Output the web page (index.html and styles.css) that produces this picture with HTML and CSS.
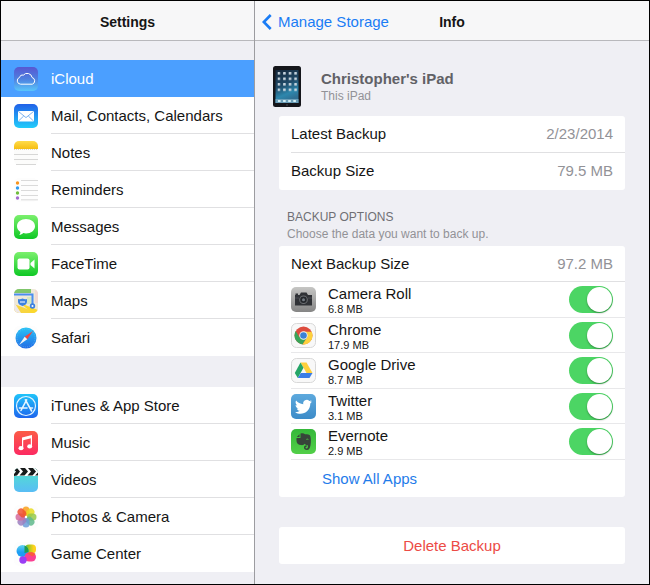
FILE: index.html
```html
<!DOCTYPE html>
<html lang="en">
<head>
<meta charset="utf-8">
<meta name="viewport" content="width=device-width, initial-scale=1">
<title>Settings</title>
<link rel="stylesheet" href="styles.css">
</head>
<body>
<div class="window">
  <aside class="sidebar">
    <header class="bar"><h1 class="bar-title">Settings</h1></header>
    <nav class="menu">
      <ul class="menu-group">
        <li><a class="menu-item is-active" href="#icloud">
          <svg class="icon" viewBox="0 0 24 24" aria-hidden="true">
            <defs><linearGradient id="g-cloud" x2="0" y2="1"><stop stop-color="#5757d2"/><stop offset=".5" stop-color="#4e80df"/><stop offset="1" stop-color="#5ac5fa"/></linearGradient></defs>
            <rect width="24" height="24" rx="5" fill="url(#g-cloud)"/>
            <path d="M6.6 17.2a3.5 3.5 0 0 1-1-6.8 2.8 2.8 0 0 1 3.7-2.2 5 5 0 0 1 8.800 2.300 3.500 3.500 0 0 1 .2 6.700z" fill="none" stroke="#fff" stroke-width="1"/>
          </svg><span class="menu-label">iCloud</span></a></li>
        <li><a class="menu-item" href="#mail">
          <svg class="icon" viewBox="0 0 24 24" aria-hidden="true">
            <defs><linearGradient id="g-mail" x2="0" y2="1"><stop stop-color="#2161e8"/><stop offset="1" stop-color="#22ccfb"/></linearGradient></defs>
            <rect width="24" height="24" rx="5" fill="url(#g-mail)"/>
            <rect x="4" y="7" width="16" height="10.5" rx="1" fill="#fff"/>
            <path d="M4.5 7.5 12 13.6l7.500-6.100M4.500 17l5.200-5M19.500 17l-5.200-5" fill="none" stroke="#5b9fe8" stroke-width=".8"/>
          </svg><span class="menu-label">Mail, Contacts, Calendars</span></a></li>
        <li><a class="menu-item" href="#notes">
          <svg class="icon" viewBox="0 0 24 24" aria-hidden="true">
            <defs><linearGradient id="g-note" x2="0" y2="1"><stop stop-color="#ffdc4b"/><stop offset="1" stop-color="#f6be12"/></linearGradient></defs>
            <rect width="24" height="24" rx="5" fill="#fcfcfb"/>
            <path d="M0 8V5a5 5 0 0 1 5-5h14a5 5 0 0 1 5 5v3z" fill="url(#g-note)"/>
            <path d="M0 8.500h24" stroke="#c9c09d" stroke-dasharray="1 1" stroke-width=".6"/>
            <path d="M0 13.500h24M0 18.500h24M2 23.500h20" stroke="#cdcdcd" stroke-width=".8"/>
          </svg><span class="menu-label">Notes</span></a></li>
        <li><a class="menu-item" href="#reminders">
          <svg class="icon" viewBox="0 0 24 24" aria-hidden="true">
            <rect width="24" height="24" rx="5" fill="#fdfdfd"/>
            <path d="M7 2.500h17M7 7.500h17M7 12.500h17M7 17.500h17M7 21.800h17" stroke="#d0d0d0" stroke-width=".8"/>
            <circle cx="3.500" cy="5" r="1.700" fill="#f7941e"/><circle cx="3.500" cy="10" r="1.700" fill="#2f9cf0"/><circle cx="3.500" cy="15" r="1.700" fill="#70bd3c"/><circle cx="3.500" cy="20" r="1.700" fill="#a36bd0"/>
          </svg><span class="menu-label">Reminders</span></a></li>
        <li><a class="menu-item" href="#messages">
          <svg class="icon" viewBox="0 0 24 24" aria-hidden="true">
            <defs><linearGradient id="g-green" x2="0" y2="1"><stop stop-color="#7bf06d"/><stop offset="1" stop-color="#0fc825"/></linearGradient></defs>
            <rect width="24" height="24" rx="5" fill="url(#g-green)"/>
            <path d="M12 4c5 0 9 3.100 9 7.200s-4 7.200-9 7.200c-1 0-1.900-.1-2.800-.4-.9 1-2.300 1.700-4 1.900.8-.8 1.200-1.800 1.200-3C4.300 15.600 3 13.600 3 11.200 3 7.100 7 4 12 4z" fill="#fff"/>
          </svg><span class="menu-label">Messages</span></a></li>
        <li><a class="menu-item" href="#facetime">
          <svg class="icon" viewBox="0 0 24 24" aria-hidden="true">
            <rect width="24" height="24" rx="5" fill="url(#g-green)"/>
            <rect x="3.500" y="6.500" width="12" height="11" rx="2" fill="#fff"/><path d="m16.500 11 4-3.500v9l-4-3.500z" fill="#fff"/>
          </svg><span class="menu-label">FaceTime</span></a></li>
        <li><a class="menu-item" href="#maps">
          <svg class="icon" viewBox="0 0 24 24" aria-hidden="true">
            <defs><clipPath id="tile"><rect width="24" height="24" rx="5"/></clipPath></defs>
            <g clip-path="url(#tile)">
              <rect width="24" height="24" fill="#eee8d8"/><path d="M0 0h17v4H0z" fill="#7fc66b"/><path d="M21 0h3v14h-3z" fill="#f1d9d2"/><path d="M0 15 24 24H0z" fill="#f8d53f"/><path d="M6 14 18 24h6v-3z" fill="#fbd82e"/><path d="M0 13l7 11H0z" fill="#eee8e8"/><path d="M13 8h5v7h-5z" fill="#d6e8c2"/>
              <path d="M0 5.500h18.500V16" fill="none" stroke="#4a8df0" stroke-width="2"/>
              <path d="M4 10c2 .8 3 0 4.500-.5 1.500.5 2.500 1.300 4.500.5v3c0 2-2 3-4.500 4C6 16 4 15 4 13z" fill="#3c82e0"/><path d="M6 13h5" stroke="#fff"/>
              <circle cx="18.500" cy="17" r="2.700" fill="#3e80de"/><circle cx="18.500" cy="17" r="1" fill="#fff"/>
            </g>
          </svg><span class="menu-label">Maps</span></a></li>
        <li><a class="menu-item" href="#safari">
          <svg class="icon" viewBox="0 0 24 24" aria-hidden="true">
            <defs><linearGradient id="g-saf" x2="0" y2="1"><stop stop-color="#27c3f6"/><stop offset="1" stop-color="#216be5"/></linearGradient></defs>
            <rect width="24" height="24" rx="5" fill="#fdfdfd"/><circle cx="12" cy="12" r="10.500" fill="url(#g-saf)"/>
            <circle cx="12" cy="12" r="9" fill="none" stroke="#8ccdf8" stroke-width=".8" stroke-dasharray=".5 1.500"/>
            <path d="m19 5-8.300 5.700 2.600 2.600z" fill="#f2453f"/><path d="m5 19 5.700-8.300 2.600 2.600z" fill="#f4f4f4"/>
          </svg><span class="menu-label">Safari</span></a></li>
      </ul>
      <ul class="menu-group">
        <li><a class="menu-item" href="#store">
          <svg class="icon" viewBox="0 0 24 24" aria-hidden="true">
            <defs><linearGradient id="g-store" x2="0" y2="1"><stop stop-color="#20c4fa"/><stop offset="1" stop-color="#1d66ee"/></linearGradient></defs>
            <rect width="24" height="24" rx="5" fill="url(#g-store)"/><circle cx="12" cy="12" r="9.500" fill="none" stroke="#e4f5ff" stroke-width="1.200"/>
            <path d="M12.600 5.800 7 16.500M11.400 5.800 17.600 17M5.500 14H13M16.500 14h2" stroke="#e4f5ff" stroke-width="1.600" stroke-linecap="round"/>
          </svg><span class="menu-label">iTunes &amp; App Store</span></a></li>
        <li><a class="menu-item" href="#music">
          <svg class="icon" viewBox="0 0 24 24" aria-hidden="true">
            <defs><linearGradient id="g-mus" x2="0" y2="1"><stop stop-color="#fb5c46"/><stop offset="1" stop-color="#fc2a62"/></linearGradient></defs>
            <rect width="24" height="24" rx="5" fill="url(#g-mus)"/>
            <path d="M8 6.500 18 4v3L9.200 9.200V17H8z" fill="#fff"/><path d="M16.800 6H18v9.500h-1.200z" fill="#fff"/><ellipse cx="7" cy="17.200" rx="2.500" ry="2.100" fill="#fff"/><ellipse cx="15.700" cy="15.400" rx="2.500" ry="2.100" fill="#fff"/>
          </svg><span class="menu-label">Music</span></a></li>
        <li><a class="menu-item" href="#videos">
          <svg class="icon" viewBox="0 0 24 24" aria-hidden="true">
            <defs><linearGradient id="g-vid" x2="0" y2="1"><stop stop-color="#50e3cb"/><stop offset="1" stop-color="#59bdf5"/></linearGradient></defs>
            <g clip-path="url(#tile)"><rect width="24" height="24" fill="url(#g-vid)"/><path d="M0 0h24v8H0z" fill="#fff"/>
            <path d="M0 0h3l3 3.500H2L0 2zM6 0h5l3 3.500H9zM14 0h5l3 3.500h-5zM21 0h3v3zM0 8V6l2-2.500h4L3 7.500zM5.500 7.500 9 3.500h5l-3.500 4zM13.500 7.500l3.500-4h5l-3.500 4zM21 7.500l3-3v3z" fill="#171b1b"/></g>
          </svg><span class="menu-label">Videos</span></a></li>
        <li><a class="menu-item" href="#photos">
          <svg class="icon petals" viewBox="0 0 24 24" aria-hidden="true">
            <rect width="24" height="24" rx="5" fill="#fdfdfd"/>
            <rect x="8.500" y="1.500" width="7" height="9.500" rx="3.500" fill="#f9a01b"/>
            <rect x="8.500" y="1.500" width="7" height="9.500" rx="3.500" fill="#e8dc20" transform="rotate(45 12 12)"/>
            <rect x="8.500" y="1.500" width="7" height="9.500" rx="3.500" fill="#95c94b" transform="rotate(90 12 12)"/>
            <rect x="8.500" y="1.500" width="7" height="9.500" rx="3.500" fill="#5fb88c" transform="rotate(135 12 12)"/>
            <rect x="8.500" y="1.500" width="7" height="9.500" rx="3.500" fill="#6b9ed8" transform="rotate(180 12 12)"/>
            <rect x="8.500" y="1.500" width="7" height="9.500" rx="3.500" fill="#9b7fc0" transform="rotate(225 12 12)"/>
            <rect x="8.500" y="1.500" width="7" height="9.500" rx="3.500" fill="#d56b9e" transform="rotate(270 12 12)"/>
            <rect x="8.500" y="1.500" width="7" height="9.500" rx="3.500" fill="#f0502f" transform="rotate(315 12 12)"/>
            <circle cx="12" cy="12" r="1.200" fill="#fff"/>
          </svg><span class="menu-label">Photos &amp; Camera</span></a></li>
        <li><a class="menu-item" href="#games">
          <svg class="icon" viewBox="0 0 24 24" aria-hidden="true">
            <defs>
              <linearGradient id="g-g1" x2="0" y2="1"><stop stop-color="#5fd4ee"/><stop offset=".6" stop-color="#1c9df4"/></linearGradient>
              <linearGradient id="g-g2"><stop stop-color="#5cbf2a"/><stop offset=".8" stop-color="#ffd21c"/></linearGradient>
            </defs>
            <rect width="24" height="24" rx="5" fill="#fdfdfd"/>
            <rect x="11" y="2.500" width="11" height="9" rx="4" fill="url(#g-g2)"/>
            <circle cx="8.500" cy="9" r="6" fill="url(#g-g1)"/><path d="M10.500 3.500a6 6 0 0 1 4 6.500l-4 1z" fill="#1d9c53"/>
            <rect x="10.500" y="10.500" width="11.500" height="9" rx="4.500" fill="#fa3f92"/><path d="M13 11.500c2-1.500 6-1.700 8.500.5l-3 2.500z" fill="#fa5a3d"/><circle cx="9" cy="18" r="3.700" fill="#9a3df4"/>
          </svg><span class="menu-label">Game Center</span></a></li>
      </ul>
    </nav>
  </aside>

  <main class="detail">
    <header class="bar bar-detail">
      <a class="back" href="#storage">
        <svg class="chevron" viewBox="0 0 10 16" aria-hidden="true"><path d="M8.700 1 1.800 8l6.900 7" fill="none" stroke="#1a7cf5" stroke-width="2.600"/></svg>
        Manage Storage</a>
      <h2 class="bar-title">Info</h2>
    </header>
    <div class="content">
      <section class="device">
        <svg class="tablet" viewBox="0 0 28 41" aria-hidden="true">
          <defs>
            <linearGradient id="g-scr" x2=".3" y2="1"><stop stop-color="#16283b"/><stop offset=".5" stop-color="#204a68"/><stop offset=".8" stop-color="#2d87ad"/><stop offset="1" stop-color="#2f6f93"/></linearGradient>
            <pattern id="apps" x="4.500" y="6" width="5.600" height="5.500" patternUnits="userSpaceOnUse"><rect width="2.600" height="2.600" rx=".5" fill="#c9d6df"/></pattern>
          </defs>
          <rect width="28" height="41" rx="2.500" fill="#15161b"/><rect x="2.500" y="4" width="23" height="33" fill="url(#g-scr)"/>
          <rect x="4.500" y="6" width="20" height="20" fill="url(#apps)"/>
          <path d="M2.500 33h23v4h-23z" fill="#6b9fb9"/><path d="M5 35h18" stroke="#d4eef4" stroke-width="2.200" stroke-dasharray="2.600 2.500"/>
          <circle cx="14" cy="39" r="1" fill="#383a40"/>
        </svg>
        <div>
          <h3 class="device-name">Christopher's iPad</h3>
          <p class="device-note">This iPad</p>
        </div>
      </section>

      <dl class="card">
        <div class="row"><dt>Latest Backup</dt><dd>2/23/2014</dd></div>
        <div class="row"><dt>Backup Size</dt><dd>79.5 MB</dd></div>
      </dl>

      <div class="section-head">
        <h3 class="section-title">BACKUP OPTIONS</h3>
        <p class="section-note">Choose the data you want to back up.</p>
      </div>

      <section class="card">
        <div class="row row-total"><span>Next Backup Size</span><span class="value">97.2 MB</span></div>
        <ul class="apps">
          <li class="app">
            <svg class="app-icon" viewBox="0 0 25 25" aria-hidden="true">
              <defs><linearGradient id="g-cam" x2="0" y2="1"><stop stop-color="#c6c6c4"/><stop offset="1" stop-color="#858585"/></linearGradient></defs>
              <rect width="25" height="25" rx="5" fill="url(#g-cam)"/>
              <path d="M4 8h4.500l1.500-2.500h5.500L17 8h4v10.500H4z" fill="#303236"/><path d="M4.500 6.500h2.500v1.500h-2.500z" fill="#303236"/>
              <circle cx="12.500" cy="12.800" r="4.300" fill="#6d7073"/><circle cx="12.500" cy="12.800" r="3.300" fill="#25282c"/><circle cx="12.500" cy="12.800" r="1.500" fill="#747b83"/><path d="M4 11h4M17 11h4" stroke="#55585c" stroke-width=".7"/>
            </svg>
            <label class="app-text" for="t-camera"><span class="app-name">Camera Roll</span><span class="app-size">6.8 MB</span></label>
            <input class="toggle" id="t-camera" type="checkbox" role="switch" checked>
          </li>
          <li class="app">
            <svg class="app-icon" viewBox="0 0 25 25" aria-hidden="true">
              <rect x=".5" y=".5" width="24" height="24" rx="5" fill="#f8f8f8" stroke="#d8d8d8"/>
              <circle cx="12.500" cy="12.500" r="9" fill="#dd4c3e"/>
              <path d="M4.700 8A9 9 0 0 0 11.500 21.400L16 14.600l-3.500-2.100-4 2z" fill="#38a558"/>
              <path d="M20.700 8.700A9 9 0 0 1 11.500 21.400l4.600-6.800.2-4.100L12.500 8.700z" fill="#fdd13d"/>
              <circle cx="12.500" cy="12.500" r="4.200" fill="#f5f5f5"/><circle cx="12.500" cy="12.500" r="3.300" fill="#3b82d6"/>
            </svg>
            <label class="app-text" for="t-chrome"><span class="app-name">Chrome</span><span class="app-size">17.9 MB</span></label>
            <input class="toggle" id="t-chrome" type="checkbox" role="switch" checked>
          </li>
          <li class="app">
            <svg class="app-icon" viewBox="0 0 25 25" aria-hidden="true">
              <rect x=".5" y=".5" width="24" height="24" rx="5" fill="#f8f8f8" stroke="#d8d8d8"/>
              <path d="M9.500 4.500h6l6 10.500h-6z" fill="#fdcf3c"/><path d="M9.500 4.500 12.500 9.700 6.800 20l-3-5z" fill="#25a567"/><path d="M9.800 15h11.700l-3 5H6.800z" fill="#3b7de6"/>
            </svg>
            <label class="app-text" for="t-drive"><span class="app-name">Google Drive</span><span class="app-size">8.7 MB</span></label>
            <input class="toggle" id="t-drive" type="checkbox" role="switch" checked>
          </li>
          <li class="app">
            <svg class="app-icon" viewBox="0 0 25 25" aria-hidden="true">
              <defs><linearGradient id="g-tw" x2="0" y2="1"><stop stop-color="#5da9dd"/><stop offset="1" stop-color="#3c8bc8"/></linearGradient></defs>
              <rect width="25" height="25" rx="5" fill="url(#g-tw)"/>
              <path d="M21 7.500c-.6.300-1.300.5-2 .6.700-.5 1.200-1.100 1.500-1.900-.7.400-1.400.7-2.200.8a3.500 3.500 0 0 0-6 3.200c-2.900-.2-5.500-1.500-7.200-3.600-1 1.700-.5 3.700 1 4.700-.5 0-1.100-.2-1.500-.4 0 1.700 1.200 3.100 2.800 3.400-.5.200-1 .2-1.600.1.500 1.300 1.700 2.300 3.200 2.400A7 7 0 0 1 4 18.200C10.500 22 19.300 18.500 19.300 9.500c.7-.6 1.300-1.200 1.700-2z" fill="#fff"/>
            </svg>
            <label class="app-text" for="t-twitter"><span class="app-name">Twitter</span><span class="app-size">3.1 MB</span></label>
            <input class="toggle" id="t-twitter" type="checkbox" role="switch" checked>
          </li>
          <li class="app">
            <svg class="app-icon" viewBox="0 0 25 25" aria-hidden="true">
              <defs><linearGradient id="g-ev" x2="0" y2="1"><stop stop-color="#35b83a"/><stop offset="1" stop-color="#52cf48"/></linearGradient></defs>
              <rect width="25" height="25" rx="5" fill="url(#g-ev)"/>
              <path d="M9.500 4.500c2-.6 3.500-.3 4.500.7 2.500 0 4.700.3 5.200 1.500.8 2.300.9 6.300.3 9.500-.5 3-1.500 4.800-3.500 4.800-2.200 0-3-1.200-3-2.500 0-1.500 1.200-2.300 2.700-2.200v1.500c-.9 0-1.200.4-1.200 1 0 .5.500.8 1.300.7 1.200-.1 1.400-1.800.9-3.200-1.700-.2-2.500-.6-3-1.500-.6 1.200-2 1.500-3.700 1.300-2.700-.3-4-1.500-4.400-3.600-.3-1.400-.2-2.500 0-3.500h3.900z" fill="#37443a"/><path d="M5.800 8 8.500 5.300V8z" fill="#37443a"/><path d="M15.300 10.500c.7-.6 1.700-.5 2.200.3" stroke="#4abc43" fill="none"/>
            </svg>
            <label class="app-text" for="t-evernote"><span class="app-name">Evernote</span><span class="app-size">2.9 MB</span></label>
            <input class="toggle" id="t-evernote" type="checkbox" role="switch" checked>
          </li>
        </ul>
        <button class="show-all" type="button">Show All Apps</button>
      </section>

      <button class="card delete" type="button">Delete Backup</button>
    </div>
  </main>
</div>
</body>
</html>
```
FILE: styles.css
```css
* {
  box-sizing: border-box;
}

body,
h1,
h2,
h3,
p,
ul,
dl,
dd {
  margin: 0;
  padding: 0;
}

ul {
  list-style: none;
}

body,
button {
  font-family: "Liberation Sans", Arial, sans-serif;
  font-size: 15px;
  color: #151515;
}

a {
  text-decoration: none;
}

.window {
  display: grid;
  grid-template-columns: minmax(253px, 39fr) 61fr;
  min-height: 100vh;
  border: 1px solid #000;
  background: #efeff4;
}

.bar {
  display: flex;
  align-items: center;
  justify-content: center;
  height: 40px;
  padding-top: 2px;
  border-bottom: 1px solid #b8b8bc;
  background: #f7f7f8;
}

.bar-title {
  font-size: 14px;
  line-height: 20px;
}

/* Sidebar */

.menu {
  display: grid;
  gap: 31px;
  padding-top: 19px;
}

.menu-group {
  background: #fff;
}

.menu-item {
  display: flex;
  align-items: stretch;
  height: 37px;
  padding-left: 13px;
  gap: 13px;
  color: inherit;
}

.icon {
  flex: none;
  align-self: center;
  width: 24px;
  height: 24px;
}

.menu-label {
  flex: 1;
  padding-top: 1px;
  border-bottom: 1px solid #e0e0e2;
  line-height: 35px;
}

.menu-group li:last-child .menu-label,
.is-active .menu-label {
  border-bottom-color: transparent;
}

.menu-item.is-active {
  background: #4b9fff;
  color: #fff;
}

.petals rect + rect {
  opacity: 0.85;
}

/* Detail pane */

.detail {
  border-left: 1px solid #9c9ca0;
}

.bar-detail {
  display: grid;
  grid-template-columns: 1fr auto 1fr;
  padding-left: 7px;
  padding-right: 7px;
}

.back {
  display: flex;
  align-items: center;
  gap: 6px;
  color: #1a7cf5;
  white-space: nowrap;
}

.chevron {
  width: 10px;
  height: 16px;
}

.content {
  padding: 25px 24px 20px;
}

.device {
  display: flex;
  align-items: center;
  gap: 20px;
  margin-left: -6px;
}

.tablet {
  width: 28px;
  height: 41px;
}

.device-name {
  font-size: 15px;
  line-height: 18px;
  color: #616166;
}

.device-note,
.section-note {
  font-size: 12px;
  line-height: 16px;
  color: #929297;
}

.card {
  margin-top: 9px;
  border-radius: 3px;
  background: #fff;
}

.row {
  display: flex;
  justify-content: space-between;
  margin-left: 12px;
  padding-right: 12px;
  border-bottom: 1px solid #e0e0e2;
  line-height: 36px;
}

.row:last-child {
  border-bottom-color: transparent;
}

.row dd,
.value {
  color: #929297;
}

.section-head {
  padding: 18px 8px 0;
}

.section-title {
  font-size: 12px;
  font-weight: 400;
  line-height: 18px;
  color: #6f6f74;
}

.section-head + .card {
  margin-top: 4px;
}

.row-total {
  line-height: 35px;
}

.app {
  display: flex;
  align-items: center;
  gap: 12px;
  height: 36px;
  margin-left: 12px;
  padding-right: 12px;
  border-bottom: 1px solid #e8e8ea;
}

.app:nth-child(even) {
  height: 35px;
}

.app-icon {
  flex: none;
  width: 25px;
  height: 25px;
}

.app-text {
  flex: 1;
  padding-top: 2px;
}

.app-name,
.app-size {
  display: block;
}

.app-name {
  line-height: 17px;
}

.app-size {
  font-size: 11px;
  line-height: 14px;
}

.toggle {
  appearance: none;
  flex: none;
  width: 44px;
  height: 27px;
  margin: 0;
  padding: 1px;
  border-radius: 14px;
  background: #d8d8dc;
}

.toggle::before {
  content: "";
  display: block;
  width: 25px;
  height: 25px;
  border-radius: 50%;
  background: #fff;
  box-shadow: 0 1px 2px rgba(0, 0, 0, 0.35);
}

.toggle:checked {
  background: #4cd564;
}

.toggle:checked::before {
  margin-left: auto;
}

.show-all {
  display: block;
  width: 100%;
  height: 37px;
  padding: 0 0 0 43px;
  border: 0;
  background: none;
  text-align: left;
  color: #1f7cea;
}

.delete {
  display: block;
  width: 100%;
  height: 37px;
  margin-top: 30px;
  border: 0;
  color: #ec4b45;
}
```
